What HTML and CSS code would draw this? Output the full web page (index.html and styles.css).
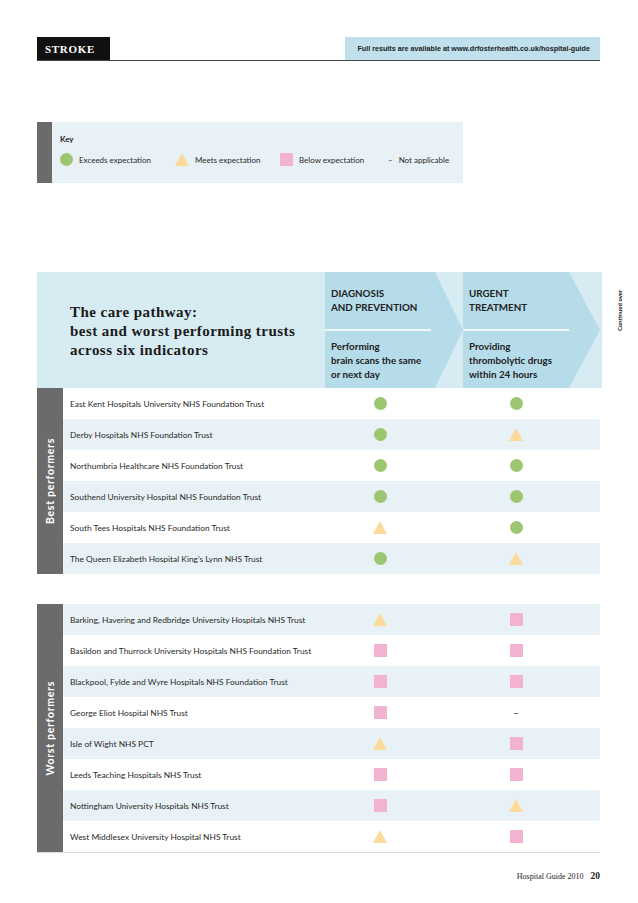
FILE: index.html
```html
<!DOCTYPE html>
<html>
<head>
<meta charset="utf-8">
<link rel="stylesheet" href="styles.css">
</head>
<body>
<div class="page">
  <header class="topbar">
    <div class="section-tag">STROKE</div>
    <div class="results-link">Full results are available at www.drfosterhealth.co.uk/hospital-guide</div>
  </header>

  <section class="key">
    <div class="key-strip"></div>
    <div class="key-body">
      <div class="key-title">Key</div>
      <div class="key-items">
        <span class="key-item"><span class="ico circle"></span>Exceeds expectation</span>
        <span class="key-item"><span class="ico tri"></span>Meets expectation</span>
        <span class="key-item"><span class="ico square"></span>Below expectation</span>
        <span class="key-item"><span class="dash">–</span>Not applicable</span>
      </div>
    </div>
  </section>

  <section class="pathway">
    <div class="thead">
      <div class="title">The care pathway:<br>best and worst performing trusts<br>across six indicators</div>
      <div class="arrow a1">
        <div class="stage">DIAGNOSIS<br>AND PREVENTION</div>
        <div class="rule"></div>
        <div class="indicator">Performing<br>brain scans the same<br>or next day</div>
      </div>
      <div class="arrow a2">
        <div class="stage">URGENT<br>TREATMENT</div>
        <div class="rule"></div>
        <div class="indicator">Providing<br>thrombolytic drugs<br>within 24 hours</div>
      </div>
      <div class="continued">Continued over</div>
    </div>

    <div class="group best">
      <div class="side"><span>Best performers</span></div>
      <div class="rows">
        <div class="row"><div class="name">East Kent Hospitals University NHS Foundation Trust</div><div class="c1"><span class="ico circle"></span></div><div class="c2"><span class="ico circle"></span></div></div>
        <div class="row"><div class="name">Derby Hospitals NHS Foundation Trust</div><div class="c1"><span class="ico circle"></span></div><div class="c2"><span class="ico tri"></span></div></div>
        <div class="row"><div class="name">Northumbria Healthcare NHS Foundation Trust</div><div class="c1"><span class="ico circle"></span></div><div class="c2"><span class="ico circle"></span></div></div>
        <div class="row"><div class="name">Southend University Hospital NHS Foundation Trust</div><div class="c1"><span class="ico circle"></span></div><div class="c2"><span class="ico circle"></span></div></div>
        <div class="row"><div class="name">South Tees Hospitals NHS Foundation Trust</div><div class="c1"><span class="ico tri"></span></div><div class="c2"><span class="ico circle"></span></div></div>
        <div class="row"><div class="name">The Queen Elizabeth Hospital King's Lynn NHS Trust</div><div class="c1"><span class="ico circle"></span></div><div class="c2"><span class="ico tri"></span></div></div>
      </div>
    </div>

    <div class="group worst">
      <div class="side"><span>Worst performers</span></div>
      <div class="rows">
        <div class="row"><div class="name">Barking, Havering and Redbridge University Hospitals NHS Trust</div><div class="c1"><span class="ico tri"></span></div><div class="c2"><span class="ico square"></span></div></div>
        <div class="row"><div class="name">Basildon and Thurrock University Hospitals NHS Foundation Trust</div><div class="c1"><span class="ico square"></span></div><div class="c2"><span class="ico square"></span></div></div>
        <div class="row"><div class="name">Blackpool, Fylde and Wyre Hospitals NHS Foundation Trust</div><div class="c1"><span class="ico square"></span></div><div class="c2"><span class="ico square"></span></div></div>
        <div class="row"><div class="name">George Eliot Hospital NHS Trust</div><div class="c1"><span class="ico square"></span></div><div class="c2"><span class="na">–</span></div></div>
        <div class="row"><div class="name">Isle of Wight NHS PCT</div><div class="c1"><span class="ico tri"></span></div><div class="c2"><span class="ico square"></span></div></div>
        <div class="row"><div class="name">Leeds Teaching Hospitals NHS Trust</div><div class="c1"><span class="ico square"></span></div><div class="c2"><span class="ico square"></span></div></div>
        <div class="row"><div class="name">Nottingham University Hospitals NHS Trust</div><div class="c1"><span class="ico square"></span></div><div class="c2"><span class="ico tri"></span></div></div>
        <div class="row"><div class="name">West Middlesex University Hospital NHS Trust</div><div class="c1"><span class="ico tri"></span></div><div class="c2"><span class="ico square"></span></div></div>
      </div>
    </div>
  </section>

  <footer class="folio"><span class="pub">Hospital Guide 2010</span><span class="num">20</span></footer>
</div>
</body>
</html>
```

FILE: styles.css
```css
* { box-sizing: border-box; }
html, body { margin: 0; padding: 0; background: #fff; }
body { font-family: Lato, "Open Sans", sans-serif; color: #2a2a2a; }

.page { width: 638px; height: 903px; padding: 37px 38px 0 37px; position: relative; }

/* top bar */
.topbar {
  display: flex; justify-content: space-between; align-items: stretch;
  height: 24px; border-bottom: 1.5px solid #444;
}
.section-tag {
  background: #111; color: #fff; width: 73px;
  font-family: "Liberation Serif", serif; font-weight: bold; font-size: 11px;
  letter-spacing: 0.7px; display: flex; align-items: center; padding-left: 8px;
}
.results-link {
  background: #bfe0ec; width: 255px;
  font-family: "Liberation Sans Narrow", "Liberation Sans", sans-serif; font-stretch: condensed;
  font-weight: bold; font-size: 7.2px; color: #222;
  display: flex; align-items: center; justify-content: flex-end; padding-right: 10px;
}

/* key */
.key {
  margin-top: 61px; width: 426px; height: 61px; display: flex; background: #e8f1f5;
}
.key-strip { width: 15px; background: #6b6b6b; }
.key-body { padding: 12px 0 0 8px; }
.key-title { font-weight: bold; font-size: 8px; color: #222; }
.key-items { display: flex; align-items: center; margin-top: 9px; font-size: 8px; }
.key-item { display: flex; align-items: center; gap: 6px; }
.key-item:nth-child(1) { width: 115px; }
.key-item:nth-child(2) { width: 105px; }
.key-item:nth-child(3) { width: 108px; }

/* icons */
.ico { display: inline-block; flex: none; }
.circle { width: 13px; height: 13px; border-radius: 50%; background: #9dc671; }
.square { width: 13px; height: 13px; background: #f1b3cf; }
.tri {
  width: 0; height: 0;
  border-left: 7px solid transparent; border-right: 7px solid transparent;
  border-bottom: 13px solid #fbda9c;
}
.na { font-size: 9px; color: #222; }

/* pathway */
.pathway { margin-top: 89px; width: 563px; }
.thead {
  position: relative; display: grid; grid-template-columns: 288px 138px 139px;
  height: 116px; background: #d7ebf2; width: 565px;
}
.title {
  font-family: "Liberation Serif", serif; font-weight: bold; font-size: 15px; line-height: 19px;
  letter-spacing: 0.45px;
  color: #1a1a1a; align-self: center; padding-left: 33px; padding-top: 2px;
}
.arrow {
  background: #b6dcea; padding-left: 6px;
  font-weight: bold; font-size: 9.8px; line-height: 14px; color: #222;
  display: flex; flex-direction: column;
}
.a1 { clip-path: polygon(0 0, 110px 0, 138px 58px, 110px 116px, 0 116px); }
.a2 { clip-path: polygon(0 0, 106px 0, 137px 58px, 106px 116px, 0 116px); }
.stage { height: 57px; padding-top: 14px; }
.rule { height: 2px; background: #eef6f9; margin-left: -6px; width: 106px; }
.indicator { padding-top: 8px; }
.continued {
  position: absolute; left: 578px; top: 18px; width: 8px; height: 40px;
  writing-mode: vertical-rl; transform: rotate(180deg);
  font-size: 6px; font-weight: bold; color: #222; white-space: nowrap;
  display: flex; align-items: center; justify-content: center;
}

.group { display: flex; }
.worst { margin-top: 30px; border-bottom: 1px solid #d8dcde; }
.side {
  width: 26px; background: #6b6b6b; color: #fff;
  display: flex; align-items: center; justify-content: center;
}
.side span {
  writing-mode: vertical-rl; transform: rotate(180deg);
  font-weight: bold; font-size: 10.5px; white-space: nowrap; letter-spacing: 0.7px;
}
.rows { flex: 1; }
.row {
  display: grid; grid-template-columns: 262px 138px 137px; height: 31px; align-items: center;
}
.best .row:nth-child(even), .worst .row:nth-child(odd) { background: #e8f1f5; }
.name { padding-left: 7px; font-size: 8.4px; color: #2a2a2a; }
.c1, .c2 { display: flex; justify-content: center; align-items: center; }
.c1 { padding-right: 28px; }
.c2 { padding-right: 31px; }

/* footer */
.folio {
  position: absolute; right: 38px; top: 871px;
  display: flex; gap: 7px; align-items: baseline;
  font-family: "Liberation Serif", serif; font-size: 8px; color: #222;
}
.folio .num { font-weight: bold; font-size: 9.5px; }
```
